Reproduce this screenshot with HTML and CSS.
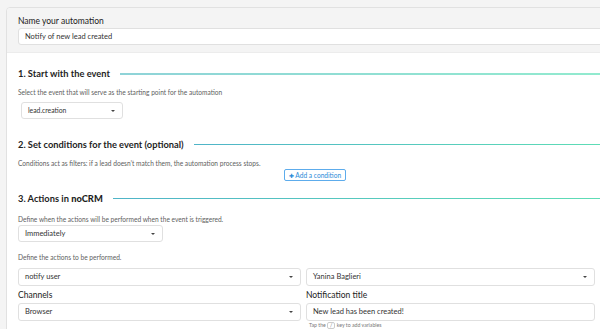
FILE: index.html
```html
<!DOCTYPE html>
<html lang="en">
  <head>
    <meta charset="UTF-8" />
    <title>Automation</title>
    <link rel="stylesheet" href="styles.css">
  </head>
  <body>
    <div class="card">
      <div class="card-head">
        <label class="label">Name your automation</label>
        <div class="input">Notify of new lead created</div>
      </div>

      <div class="card-body">
        <div class="section first">
          <h2 class="heading"><span>1. Start with the event</span><span class="rule thick"></span></h2>
          <p class="hint">Select the event that will serve as the starting point for the automation</p>
          <div class="select small">lead.creation<span class="caret"></span></div>
        </div>

        <div class="section">
          <h2 class="heading"><span>2. Set conditions for the event (optional)</span><span class="rule"></span></h2>
          <p class="hint">Conditions act as filters: if a lead doesn’t match them, the automation process stops.</p>
          <div class="btn-row">
            <button class="add-btn"><span class="plus">✚</span> Add a condition</button>
          </div>
        </div>

        <div class="section last">
          <h2 class="heading"><span>3. Actions in <b>noCRM</b></span><span class="rule"></span></h2>
          <p class="hint">Define when the actions will be performed when the event is triggered.</p>
          <div class="select medium">Immediately<span class="caret"></span></div>
          <p class="hint second">Define the actions to be performed.</p>

          <div class="fields">
            <div class="select">notify user<span class="caret"></span></div>
            <div class="select">Yanina Baglieri<span class="caret"></span></div>
            <div class="field">
              <label class="label">Channels</label>
              <div class="select">Browser<span class="caret"></span></div>
            </div>
            <div class="field">
              <label class="label">Notification title</label>
              <div class="input">New lead has been created!</div>
              <p class="tip">Tap the <span class="key">/</span> key to add variables</p>
            </div>
          </div>
        </div>
      </div>
    </div>
  </body>
</html>
```

FILE: styles.css
```css
* {
  box-sizing: border-box;
  margin: 0;
  padding: 0;
}

body {
  background-color: #f4f4f4;
  font-family: Lato, "Open Sans", sans-serif;
  color: #2b2b2b;
  overflow: hidden;
  height: 329px;
}

.card {
  margin: 7px 0 0 6px;
  width: 630px;
  border: 1px solid #e1e1e1;
  border-radius: 4px 0 0 0;
  background-color: #fff;
}

.card-head {
  background-color: #f4f4f4;
  padding: 7px 11px 7px 11px;
  border-bottom: 1px solid #ececec;
  border-radius: 4px 0 0 0;
}

.label {
  display: block;
  font-size: 8.5px;
  color: #222;
  height: 13px;
  line-height: 12px;
}

.input,
.select {
  height: 17px;
  border: 1px solid #e0e0e0;
  border-radius: 3px;
  background-color: #fff;
  font-size: 7.5px;
  line-height: 15px;
  padding: 0 6px;
  color: #333;
  position: relative;
}

.card-body {
  padding: 13px 0 0 11px;
}

.section {
  margin-bottom: 10px;
}

.section.first {
  margin-bottom: 18px;
}

.heading {
  display: flex;
  align-items: center;
  gap: 10px;
  font-size: 9.3px;
  font-weight: bold;
  color: #1e1e1e;
  height: 15px;
}

.heading b {
  font-weight: 900;
}

.rule {
  display: block;
  flex: 1;
  height: 1px;
  border-top: 1px solid #52b6c9;
  border-image: linear-gradient(90deg, #4fb4c8, #5fe0b4) 1;
}

.rule.thick {
  height: 2px;
  border-top-width: 2px;
  border-image: linear-gradient(90deg, #8fd3d8, #92ecce) 1;
}

.hint {
  font-size: 6.6px;
  color: #5e5e5e;
  margin-top: 7px;
  line-height: 8px;
}

.section.last .hint {
  margin-top: 9px;
}

.section.last .hint.second {
  margin-top: 11px;
}

.select.small {
  width: 102px;
  margin: 6px 0 0 3px;
  font-size: 6.8px;
}

.select.medium {
  width: 145px;
  margin-top: 2px;
}

.caret {
  position: absolute;
  right: 7px;
  top: 7px;
  border-left: 2px solid transparent;
  border-right: 2px solid transparent;
  border-top: 2px solid #444;
}

.btn-row {
  display: flex;
  padding-left: 266px;
  margin-top: 2px;
}

.add-btn {
  height: 12px;
  width: 62px;
  border: 1px solid #5dacec;
  border-radius: 2px;
  background-color: #fff;
  color: #2a8ad8;
  font-family: inherit;
  font-size: 6.6px;
  line-height: 10px;
  white-space: nowrap;
}

.plus {
  font-size: 6px;
}

.fields {
  display: grid;
  grid-template-columns: 283px 289px;
  column-gap: 5px;
  row-gap: 1px;
  margin-top: 7px;
}

.fields .select,
.fields .input {
  height: 18px;
  line-height: 16px;
}

.fields .label {
  height: 16px;
  line-height: 17px;
}

.tip {
  font-size: 5.2px;
  color: #777;
  margin: 1px 0 0 3px;
  line-height: 7px;
}

.key {
  display: inline-block;
  border: 1px solid #ccc;
  border-radius: 2px;
  padding: 0 2px;
  line-height: 5px;
}
```
